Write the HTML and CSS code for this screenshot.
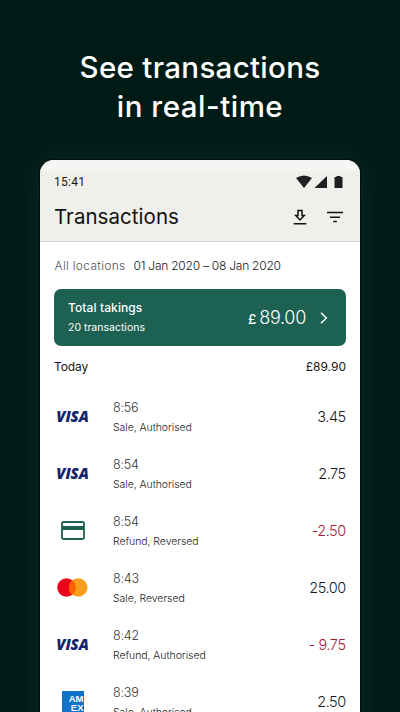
FILE: index.html
```html
<!DOCTYPE html>
<html lang="en">
<head>
<meta charset="utf-8">
<title>Transactions</title>
<link rel="stylesheet" href="styles.css">
</head>
<body>
<main class="promo">
  <h1 class="headline"><span class="line-one">See transactions</span><br><span class="line-two">in real-time</span></h1>
  <section class="phone">
    <header class="top">
      <div class="status">
        <span class="clock">15:41</span>
        <svg class="signals" width="48" height="14" viewBox="0 0 48 14" fill="#202020"><path d="M0 3.1Q8-2 16 3.1L8 13Z"/><path d="M31 1V13H18.5Z"/><path d="M38.500 2h2V1h4v1h2v11h-8Z"/></svg>
      </div>
      <div class="titlebar">
        <h2 class="title">Transactions</h2>
        <svg class="download" width="14" height="17" viewBox="0 0 14 17" fill="none" stroke="#111" stroke-width="1.5"><path d="M5 1.5h4v5h2.3L7 11 2.7 6.500H5Z"/><path d="M.7 14.800h12.600"/></svg>
        <svg class="filter" width="16" height="12" viewBox="0 0 16 12" stroke="#111" stroke-width="1.4"><path d="M0 1.500h16M3 6.200h10M6.300 10.500h3.500"/></svg>
      </div>
    </header>
    <div class="filters"><span class="place">All locations</span><span class="dates">01 Jan 2020 – 08 Jan 2020</span></div>
    <div class="takings">
      <div class="summary"><div class="label">Total takings</div><div class="count">20 transactions</div></div>
      <div class="total"><span class="pound">£</span><span class="sum">89.00</span></div>
      <svg class="chevron" width="8" height="12" viewBox="0 0 8 12" fill="none" stroke="#fff" stroke-width="1.5"><path d="M1 .8 6.300 6 1 11.200"/></svg>
    </div>
    <div class="day"><span class="today">Today</span><span class="day-total">£89.90</span></div>
    <ul class="list">
      <li class="row"><div class="brand"><span class="visa">VISA</span></div><div class="info"><div class="time">8:56</div><div class="kind">Sale, Authorised</div></div><div class="amount">3.45</div></li>
      <li class="row"><div class="brand"><span class="visa">VISA</span></div><div class="info"><div class="time">8:54</div><div class="kind">Sale, Authorised</div></div><div class="amount">2.75</div></li>
      <li class="row"><div class="brand"><svg class="card" width="24" height="19" viewBox="0 0 24 19"><rect x="1" y="1" width="22" height="17" rx="1.500" fill="none" stroke="#1d6152" stroke-width="1.800"/><path d="M1 5h22v4H1Z" fill="#1d6152"/></svg></div><div class="info"><div class="time">8:54</div><div class="kind">Refund, Reversed</div></div><div class="amount refund">-2.50</div></li>
      <li class="row"><div class="brand"><svg class="mastercard" width="31" height="19" viewBox="0 0 31 19"><circle cx="9.500" cy="9.500" r="9.300" fill="#eb001b"/><circle cx="21.200" cy="9.500" r="9.300" fill="#f79e1b"/><path d="M15.350 2.270a9.300 9.300 0 0 1 0 14.460a9.300 9.300 0 0 1 0-14.460Z" fill="#ff5f00"/></svg></div><div class="info"><div class="time">8:43</div><div class="kind">Sale, Reversed</div></div><div class="amount">25.00</div></li>
      <li class="row"><div class="brand"><span class="visa">VISA</span></div><div class="info"><div class="time">8:42</div><div class="kind">Refund, Authorised</div></div><div class="amount refund spaced">- 9.75</div></li>
      <li class="row"><div class="brand"><span class="amex"><span>AM</span><span>EX</span></span></div><div class="info"><div class="time">8:39</div><div class="kind">Sale, Authorised</div></div><div class="amount">2.50</div></li>
    </ul>
  </section>
</main>
</body>
</html>
```
FILE: styles.css
```css
* { box-sizing: border-box; margin: 0; padding: 0; }
body { font-family: Inter, "Liberation Sans", sans-serif; color: #161616; background: #001b16; overflow: hidden; }
svg { display: block; flex: none; }
span { white-space: nowrap; }
.promo { height: 712px; overflow: hidden; padding-top: 48px; }
.headline { height: 112px; font-size: 29.500px; line-height: 39px; font-weight: 500; color: #fff; text-align: center; }
.line-one { letter-spacing: .3px; }
.line-two { letter-spacing: .5px; }
.phone { width: 320px; height: 620px; margin: 0 auto; background: #fff; border-radius: 14px 14px 0 0; box-shadow: 0 0 1px 1px #000d0a, 0 0 32px rgba(50, 85, 75, .32); overflow: hidden; }
.top { height: 82px; background: linear-gradient(#f5f5f4 0 11px, #efefeb 11px); border-bottom: 1px solid #d5d5d4; padding: 15px 17px 0 14px; }
.status { display: flex; justify-content: space-between; height: 14px; align-items: center; }
.signals { margin-right: -1px; }
.clock { font: 12px/14px Roboto, sans-serif; letter-spacing: .3px; }
.titlebar { display: flex; align-items: center; height: 28px; margin-top: 14px; }
.title { font-size: 20.500px; line-height: 28px; font-weight: 400; color: #111; letter-spacing: .05px; }
.download { margin-left: auto; }
.filter { margin-left: 20px; }
.filters { display: flex; gap: 8px; height: 47px; align-items: center; padding-left: 14.500px; font-size: 12px; font-weight: 300; }
.place { color: #555; letter-spacing: .3px; }
.dates { letter-spacing: -.24px; }
.takings { height: 57px; margin: 0 14px; border-radius: 7px; background: #1c6152; color: #fff; display: flex; align-items: center; padding: 0 18px 0 14px; }
.summary { flex: 1; padding-top: 1px; }
.label { font-size: 12px; line-height: 18px; font-weight: 500; letter-spacing: .1px; }
.count { font-size: 10.500px; line-height: 20px; padding-top: 1px; }
.total { display: flex; align-items: baseline; gap: 3px; }
.pound { font-size: 13.500px; font-weight: 500; }
.sum { font-size: 18px; font-weight: 300; letter-spacing: -.3px; }
.chevron { margin-left: 14px; }
.day { height: 42px; display: flex; justify-content: space-between; align-items: center; padding: 0 14px 1px; font-size: 12px; }
.today { letter-spacing: -.1px; }
.list { list-style: none; }
.row { height: 57px; display: flex; align-items: center; padding: 0 14px; }
.brand { width: 37px; display: flex; justify-content: center; }
.visa { font: italic 800 15px/18px "Open Sans", sans-serif; color: #13246b; letter-spacing: -.1px; padding-bottom: 1px; }
.info { margin-left: 22px; flex: 1; padding-top: 1px; }
.time { font-size: 12.500px; line-height: 19px; font-weight: 300; color: #333; letter-spacing: -.2px; }
.kind { font-size: 10.500px; line-height: 19px; font-weight: 300; color: #222; letter-spacing: -.06px; padding-top: 1px; }
.amount { font-size: 14.500px; font-weight: 300; color: #161616; letter-spacing: -.5px; margin-right: .4px; }
.refund { color: #aa1735; }
.spaced { letter-spacing: -.4px; }
.amex { width: 22px; height: 22px; background: #1172ca; color: #fff; font: 700 9.500px/9px "Liberation Sans", sans-serif; display: flex; flex-direction: column; align-items: flex-end; padding-top: 3px; overflow: hidden; }
```
